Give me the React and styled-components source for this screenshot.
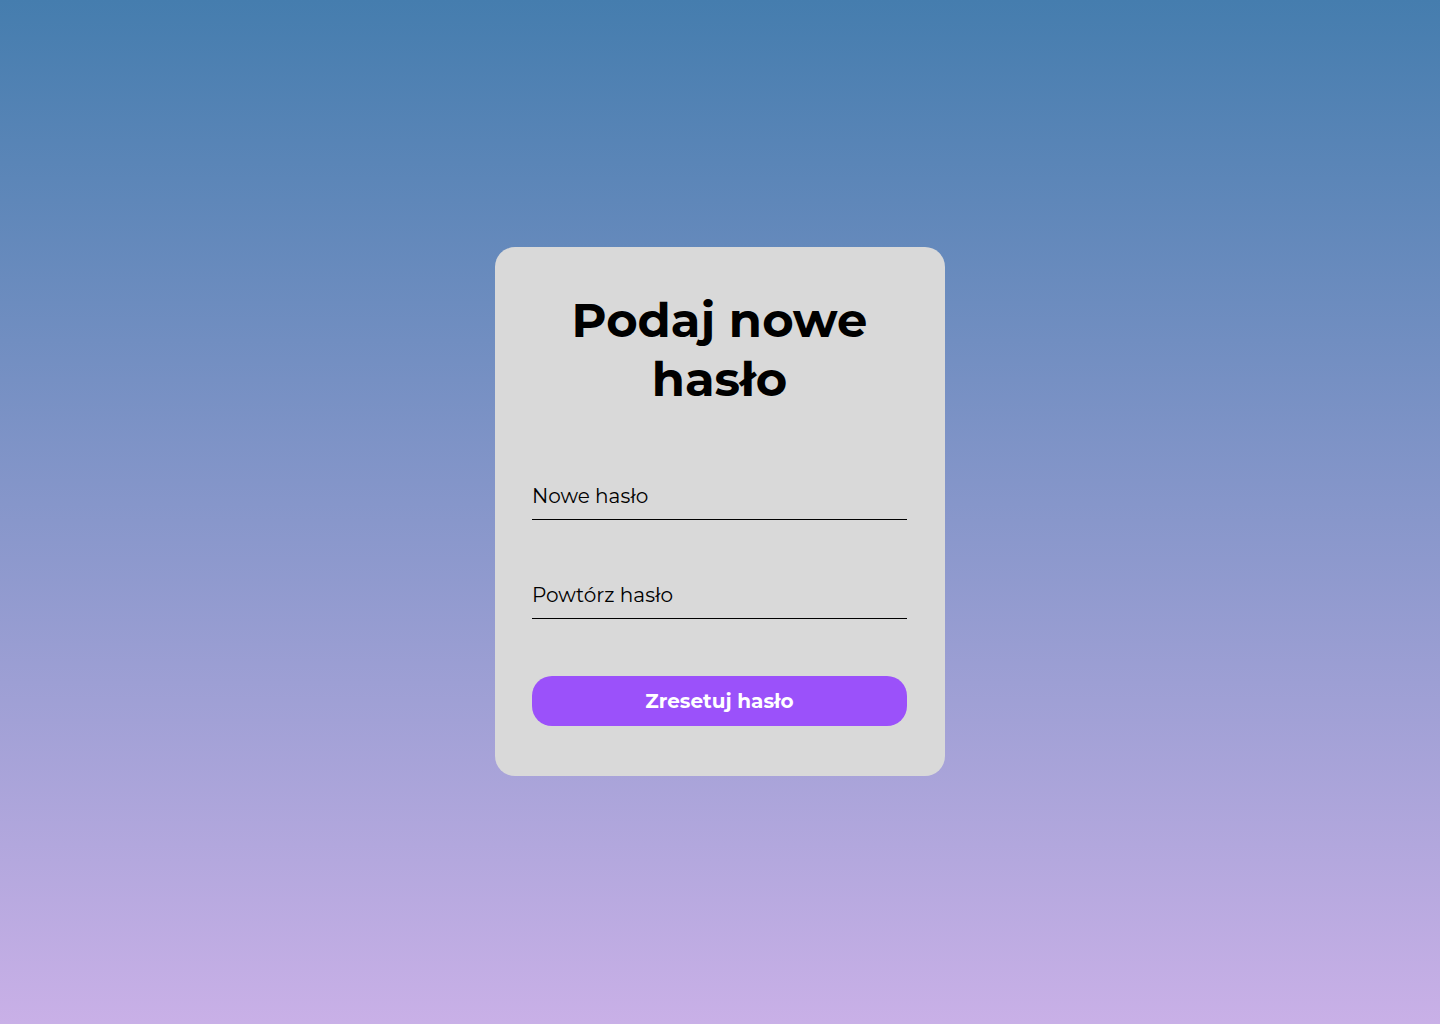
import styled, { createGlobalStyle } from 'styled-components'

const GlobalStyle = createGlobalStyle`
  * {
    box-sizing: border-box;
  }
  body {
    margin: 0;
    font-family: Montserrat, "DejaVu Sans", "Noto Sans", sans-serif;
  }
`

const Page = styled.div`
  min-height: 100vh;
  padding-bottom: 1px;
  display: flex;
  align-items: center;
  justify-content: center;
  background: linear-gradient(180deg, #457dae 0%, #c9b0e7 100%);
`

const Card = styled.div`
  width: 450px;
  padding: 44px 38px 50px 37px;
  background: #d9d9d9;
  border-radius: 20px;
`

const Title = styled.h1`
  margin: 0 0 71px;
  text-align: center;
  font-size: 48px;
  line-height: 59px;
  font-weight: 700;
  color: #000;
`

const Form = styled.form`
  display: flex;
  flex-direction: column;
  gap: 59px;
`

const Input = styled.input`
  width: 100%;
  height: 40px;
  padding: 0 0 8px;
  border: none;
  border-bottom: 1px solid #000;
  background: transparent;
  font-family: inherit;
  font-size: 20px;
  color: #000;
  outline: none;

  &::placeholder {
    color: #000;
  }
`

const Button = styled.button`
  height: 50px;
  margin-top: -2px;
  border: none;
  border-radius: 20px;
  background: #9b51fa;
  color: #fff;
  font-family: inherit;
  font-size: 20px;
  font-weight: 700;
  cursor: pointer;
`

const App = () => {
  return (
    <>
      <GlobalStyle />
      <Page>
        <Card>
          <Title>Podaj nowe hasło</Title>
          <Form onSubmit={(e) => e.preventDefault()}>
            <Input type="password" placeholder="Nowe hasło" />
            <Input type="password" placeholder="Powtórz hasło" />
            <Button type="submit">Zresetuj hasło</Button>
          </Form>
        </Card>
      </Page>
    </>
  )
}

export default App
